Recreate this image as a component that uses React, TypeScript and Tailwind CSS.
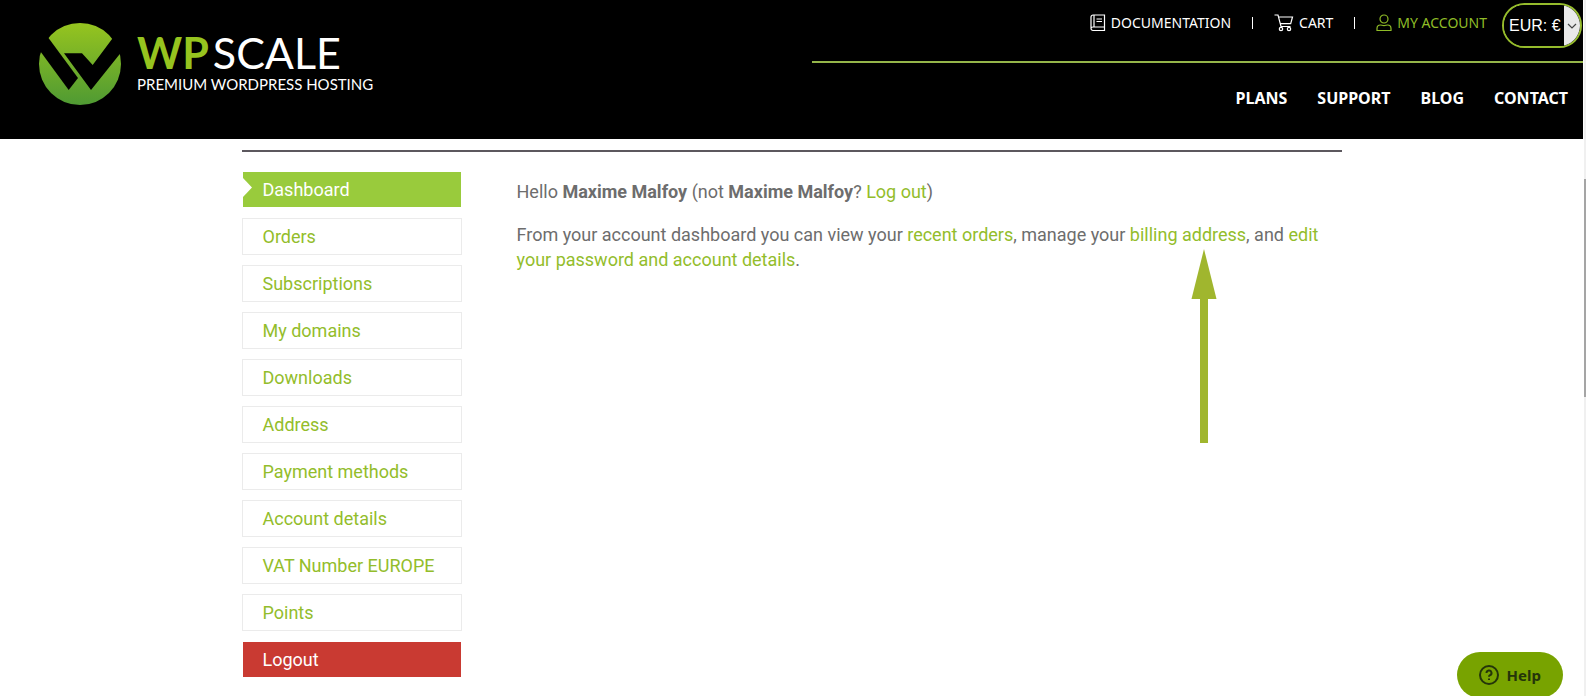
import React from 'react';

interface MenuItem {
  label: string;
  kind?: 'active' | 'logout';
}

const menuItems: MenuItem[] = [
  { label: 'Dashboard', kind: 'active' },
  { label: 'Orders' },
  { label: 'Subscriptions' },
  { label: 'My domains' },
  { label: 'Downloads' },
  { label: 'Address' },
  { label: 'Payment methods' },
  { label: 'Account details' },
  { label: 'VAT Number EUROPE' },
  { label: 'Points' },
  { label: 'Logout', kind: 'logout' },
];

const navItems = ['PLANS', 'SUPPORT', 'BLOG', 'CONTACT'];

const Logo: React.FC = () => (
  <a href="#" className="flex items-start gap-4 pt-[22px] pl-[39px] font-['Lato',sans-serif]">
    <svg width="82" height="84" viewBox="0 0 82 84" aria-hidden="true">
      <defs>
        <linearGradient id="logoGreen" x1="0" y1="0" x2="0" y2="1">
          <stop offset="0" stopColor="#96c41f" />
          <stop offset="1" stopColor="#4f9a33" />
        </linearGradient>
      </defs>
      <circle cx="41" cy="42" r="41" fill="url(#logoGreen)" />
      <path d="M4 8.500 39 56 29.700 68-6 19.200Z" fill="#000" />
      <path d="M25 31.300H43L53.700 43 79 9 88 23 52 68Z" fill="#000" />
    </svg>
    <span className="flex flex-col pt-2 text-white">
      <span className="flex gap-1 text-[43px] leading-[46px]">
        <b className="font-bold text-[#96c41f]">WP</b>
        <span>SCALE</span>
      </span>
      <span className="text-[15px] leading-[16px]">PREMIUM WORDPRESS HOSTING</span>
    </span>
  </a>
);

const BookIcon: React.FC = () => (
  <svg width="16" height="18" viewBox="0 0 16 18" fill="none" stroke="currentColor" strokeWidth="1.200" aria-hidden="true">
    <path d="M3 1h11.500v15.500H3a2 2 0 0 1-2-2V3a2 2 0 0 1 2-2ZM1 14.500c0-1 1-1.500 2-1.500h11.500M4 1v12M6.500 5h5.500M6.500 7.500h5.500" />
  </svg>
);

const CartIcon: React.FC = () => (
  <svg width="20" height="18" viewBox="0 0 20 18" fill="none" stroke="currentColor" strokeWidth="1.200" aria-hidden="true">
    <path d="M.500 1h3.500l3 11.500h9.500M4.600 3h13.900l-1.800 6.700H6.400" />
    <circle cx="7" cy="15" r="1.700" />
    <circle cx="15" cy="15" r="1.700" />
  </svg>
);

const UserIcon: React.FC = () => (
  <svg width="16" height="18" viewBox="0 0 16 18" fill="none" stroke="currentColor" strokeWidth="1.200" aria-hidden="true">
    <circle cx="8" cy="5" r="4" />
    <path d="M1 16.500v-2c0-2 1.500-3.500 3.500-3.500 1.200 0 2 .600 3.500.600s2.300-.600 3.500-.600c2 0 3.500 1.500 3.500 3.500v2Z" />
  </svg>
);

const Header: React.FC = () => (
  <header className="flex h-[139px] justify-between bg-black font-['Noto_Sans',sans-serif] text-white">
    <Logo />
    <div className="w-[771px]">
      <div className="flex h-[63px] items-start justify-end border-b-2 border-[#95b54a] pt-[3px] pr-px text-[14px] leading-[20px]">
        <div className="flex items-center pt-[10px]">
          <a href="#" className="flex items-center gap-[5px]"><BookIcon />DOCUMENTATION</a>
          <span className="mx-[21px] h-3 w-px bg-white" />
          <a href="#" className="flex items-center gap-[5px]"><CartIcon />CART</a>
          <span className="mx-[21px] h-3 w-px bg-white" />
          <a href="#" className="flex items-center gap-[5px] text-[#8fbc27]"><UserIcon />MY ACCOUNT</a>
        </div>
        <div className="relative ml-[15px] flex h-[45px] w-[80px] overflow-hidden rounded-full border-2 border-[#95bb2c]">
          <select
            aria-label="Currency"
            className="w-full appearance-none bg-black pl-[5px] font-['Liberation_Sans',sans-serif] text-[16px] text-white"
          >
            <option>EUR: €</option>
          </select>
          <span className="pointer-events-none absolute inset-y-0 right-0 flex w-4 items-center justify-center bg-[#e9e9e9]">
            <svg width="10" height="6" viewBox="0 0 10 6" fill="none" stroke="#444" strokeWidth="1.200" aria-hidden="true">
              <path d="M1 1l4 4 4-4" />
            </svg>
          </span>
        </div>
      </div>
      <nav className="flex justify-end gap-[30px] pt-[23px] pr-[15px] text-[16px] leading-[24px] font-bold">
        {navItems.map((item) => (
          <a key={item} href="#">{item}</a>
        ))}
      </nav>
    </div>
  </header>
);

const itemStyle = (kind?: string) => {
  if (kind === 'active') return 'border-transparent bg-[#99cb3c] text-white';
  if (kind === 'logout') return 'border-transparent bg-[#c93a32] text-white';
  return 'border-[#ebebeb] text-[#93bd2b]';
};

const Sidebar: React.FC = () => (
  <nav className="w-[220px] shrink-0">
    <ul className="flex flex-col gap-[10px]">
      {menuItems.map((item) => (
        <li key={item.label}>
          <a
            href="#"
            className={`relative block border bg-clip-padding py-[5px] pl-5 leading-[25px] ${itemStyle(item.kind)}`}
          >
            {item.kind === 'active' && (
              <svg className="absolute top-[6px] left-0" width="10" height="20" viewBox="0 0 10 20" aria-hidden="true">
                <path d="M0 0l9 9.500L0 19Z" fill="#fff" />
              </svg>
            )}
            {item.label}
          </a>
        </li>
      ))}
    </ul>
  </nav>
);

const App: React.FC = () => {
  return (
    <div className="relative min-h-screen bg-white pr-[3px] font-['Roboto',sans-serif] text-[18px] text-[#6d6d6d]">
      <Header />
      <main className="mx-auto mt-[11px] max-w-[1100px] border-t-2 border-[#5c585e]">
        <div className="flex gap-[55px] pt-[19px]">
          <Sidebar />
          <div className="flex-1 pt-2 leading-[25px]">
            <p className="mb-[18px]">
              Hello <strong>Maxime Malfoy</strong> (not <strong>Maxime Malfoy</strong>?{' '}
              <a href="#" className="text-[#93bd2b]">Log out</a>)
            </p>
            <p>
              From your account dashboard you can view your{' '}
              <a href="#" className="text-[#93bd2b]">recent orders</a>, manage your{' '}
              <a href="#" className="relative text-[#93bd2b]">
                billing address
                {/* arrow pointing at the billing link */}
                <svg className="absolute top-[25px] left-[61px]" width="26" height="194" viewBox="0 0 26 194" aria-hidden="true">
                  <path d="M13 0l12.500 50H17v144H9V50H.500Z" fill="#a0b62e" />
                </svg>
              </a>
              , and{' '}
              <a href="#" className="text-[#93bd2b]">edit your password and account details</a>.
            </p>
          </div>
        </div>
      </main>

      <button
        type="button"
        className="fixed right-[23px] -bottom-[2px] flex h-[46px] items-center gap-2 rounded-full bg-[#78a300] px-[22px] font-['Noto_Sans',sans-serif] text-[15px] font-bold text-[#24350a]"
      >
        <svg width="20" height="20" viewBox="0 0 20 20" fill="none" stroke="currentColor" strokeWidth="2" aria-hidden="true">
          <circle cx="10" cy="10" r="9" />
          <path d="M7.500 8a2.500 2.500 0 1 1 3.600 2.200c-.700.400-1.100.700-1.100 1.600M10 13.400v1.600" />
        </svg>
        Help
      </button>

      {/* page scroll track */}
      <div className="fixed inset-y-0 right-0 w-[2px] bg-[#f0f0f0] pt-[179px]">
        <div className="h-[218px] bg-[#a5a5a5]" />
      </div>
    </div>
  );
};

export default App;
